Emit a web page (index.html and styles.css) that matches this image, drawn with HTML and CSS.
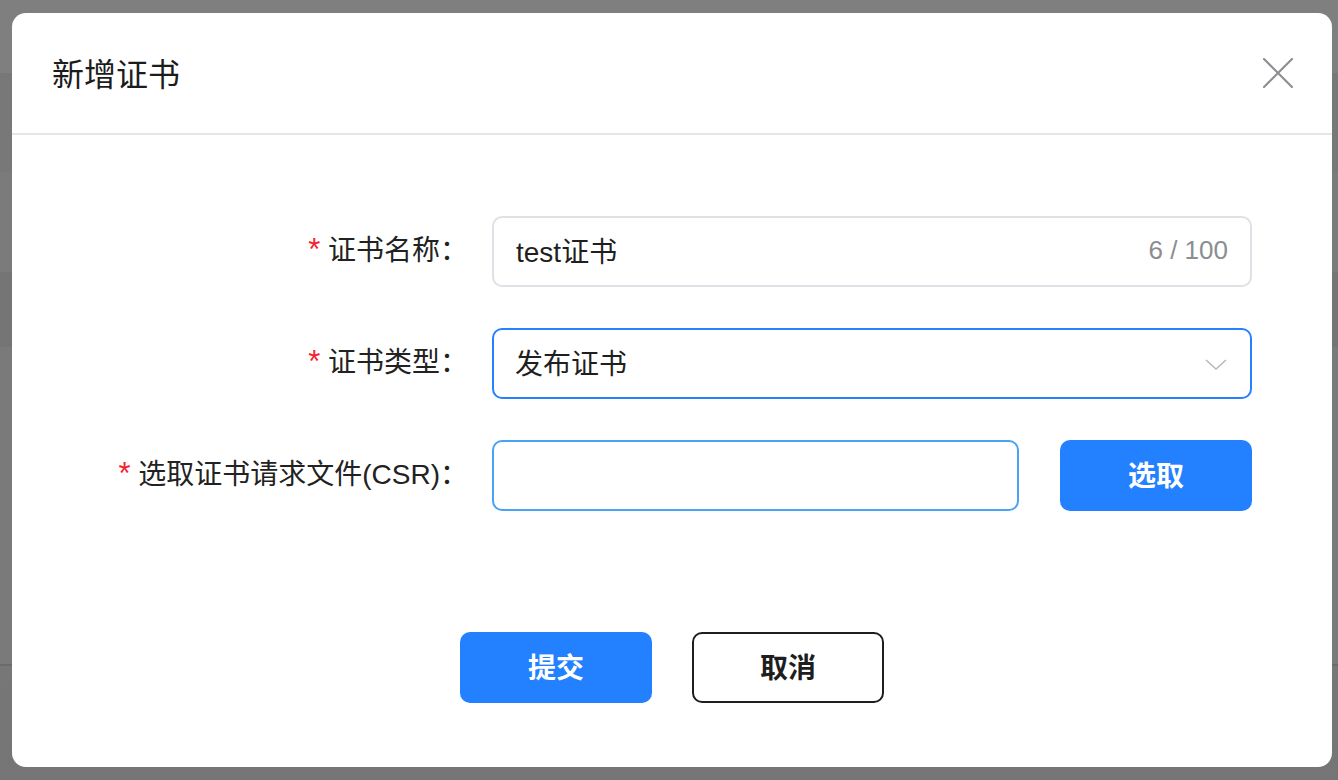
FILE: index.html
```html
<!DOCTYPE html>
<html lang="zh-CN">
<head>
<meta charset="utf-8">
<title>新增证书</title>
<link rel="stylesheet" href="styles.css">
</head>
<body>
<div class="dialog">
  <div class="dialog-header">
    <div class="dialog-title">新增证书</div>
    <button class="dialog-close" aria-label="关闭">
      <svg width="30" height="30" viewBox="0 0 30 30"><path d="M1 1 L29 29 M29 1 L1 29" stroke="#8e8f94" stroke-width="2.2" stroke-linecap="round" fill="none"/></svg>
    </button>
  </div>
  <div class="dialog-body">
    <div class="form">
      <div class="form-row">
        <label class="form-label"><span class="req">*</span> 证书名称：</label>
        <div class="field field-input">
          <span class="field-value">test证书</span>
          <span class="field-count">6 / 100</span>
        </div>
      </div>
      <div class="form-row">
        <label class="form-label"><span class="req">*</span> 证书类型：</label>
        <div class="field field-select">
          <span class="field-value">发布证书</span>
          <svg class="chevron" width="22" height="11" viewBox="0 0 22 11"><path d="M1 1 L11 10 L21 1" stroke="#b4b6bb" stroke-width="1.4" fill="none"/></svg>
        </div>
      </div>
      <div class="form-row">
        <label class="form-label"><span class="req">*</span> 选取证书请求文件(CSR)：</label>
        <div class="file-group">
          <div class="field field-file"></div>
          <button class="btn btn-primary btn-pick">选取</button>
        </div>
      </div>
    </div>
    <div class="dialog-footer">
      <button class="btn btn-primary">提交</button>
      <button class="btn btn-default">取消</button>
    </div>
  </div>
</div>
</body>
</html>
```

FILE: styles.css
```css
* { box-sizing: border-box; }

html, body {
  margin: 0;
  padding: 0;
}

body {
  width: 1338px;
  height: 780px;
  overflow: hidden;
  font-family: "Liberation Sans", "Noto Sans CJK SC", sans-serif;
  background: linear-gradient(to bottom,
    #7f7f7f 0px, #7f7f7f 73px,
    #787878 73px, #787878 172px,
    #7b7b7b 172px, #7b7b7b 272px,
    #757575 272px, #757575 347px,
    #7a7a7a 347px, #7a7a7a 664px,
    #6b6b6b 664px, #6b6b6b 666px,
    #777777 666px, #757575 780px);
  padding-top: 13px;
  padding-left: 12px;
}

.dialog {
  width: 1320px;
  height: 754px;
  background: #ffffff;
  border-radius: 14px;
  display: flex;
  flex-direction: column;
}

.dialog-header {
  height: 122px;
  border-bottom: 2px solid #e6e6e6;
  display: flex;
  align-items: center;
  justify-content: space-between;
  padding: 0 39px 0 40px;
}

.dialog-title {
  font-family: "Noto Sans CJK SC", sans-serif;
  font-size: 32px;
  line-height: 40px;
  color: #1c1c1c;
  margin-top: -2px;
}

.dialog-close {
  width: 30px;
  height: 30px;
  padding: 0;
  border: 0;
  background: none;
  display: flex;
}

.dialog-body {
  padding-top: 81px;
  display: flex;
  flex-direction: column;
}

.form {
  display: flex;
  flex-direction: column;
  gap: 41px;
}

.form-row {
  display: grid;
  grid-template-columns: 480px 760px;
  align-items: center;
  height: 71px;
}

.form-label {
  text-align: right;
  padding-right: 24px;
  font-size: 28px;
  line-height: 36px;
  color: #222222;
  white-space: nowrap;
  margin-top: -3px;
}

.req {
  color: #f5222d;
  font-size: 31px;
}

.field {
  height: 71px;
  border-radius: 10px;
  display: flex;
  align-items: center;
  padding: 0 22px 3px;
  font-size: 28px;
  color: #1f1f1f;
}

.field-input {
  border: 2px solid #dfe1e6;
  justify-content: space-between;
}

.field-count {
  color: #8c8d92;
  font-size: 26px;
}

.field-select {
  border: 2px solid #2681ff;
  justify-content: space-between;
  padding-left: 21px;
  padding-right: 23px;
}

.field-select .field-value {
  font-family: "Noto Sans CJK SC", sans-serif;
}

.chevron {
  display: block;
  margin-top: 4px;
}

.file-group {
  display: flex;
  gap: 41px;
}

.field-file {
  width: 527px;
  border: 2px solid #48a2f5;
}

.btn {
  width: 192px;
  height: 71px;
  border-radius: 10px;
  font-family: "Noto Sans CJK SC", sans-serif;
  font-size: 28px;
  font-weight: 700;
  padding: 0 0 3px;
  cursor: pointer;
}

.btn-primary {
  background: #2380ff;
  border: 0;
  color: #ffffff;
}

.btn-default {
  background: #ffffff;
  border: 2px solid #1e1e1e;
  color: #1e1e1e;
}

.dialog-footer {
  margin-top: 121px;
  display: flex;
  justify-content: center;
  gap: 40px;
}
```
